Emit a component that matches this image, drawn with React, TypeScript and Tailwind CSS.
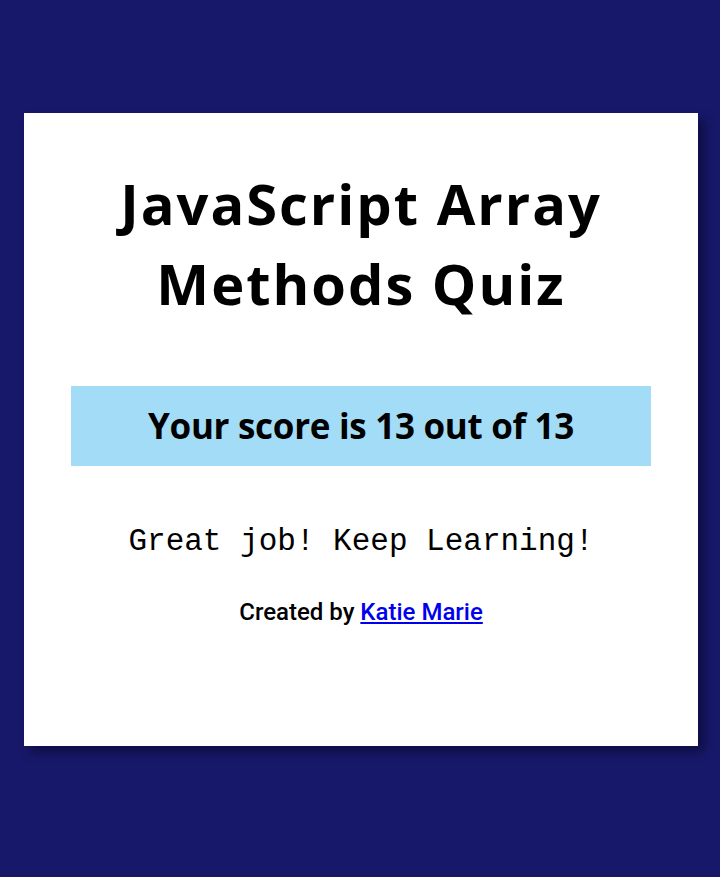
import React from "react";

export default function App() {
  return (
    <div className="min-h-[877px] w-full bg-[#18186a] pt-[113px] pl-[24px]">
      <div className="w-[674px] h-[633px] bg-white shadow-[6px_6px_10px_rgba(0,0,20,0.45)] flex flex-col items-center pt-[50px]">
        <h1
          className="text-center text-[56px] leading-[80px] font-bold text-black tracking-[2px]"
          style={{ fontFamily: "'Open Sans', 'Noto Sans', sans-serif" }}
        >
          JavaScript Array
          <br />
          Methods Quiz
        </h1>
        <div className="mt-[63px] w-[580px] h-[80px] bg-[#a3dcf7] flex items-center justify-center">
          <span
            className="text-[35px] font-bold text-black tracking-[-0.3px]"
            style={{ fontFamily: "'Open Sans', 'Noto Sans', sans-serif" }}
          >
            Your score is 13 out of 13
          </span>
        </div>
        <p
          className="mt-[56px] text-[31px] leading-[40px] text-black"
          style={{ fontFamily: "'Liberation Mono', monospace" }}
        >
          Great job! Keep Learning!
        </p>
        <p
          className="mt-[36px] text-[24px] leading-[28px] font-medium text-black"
          style={{ fontFamily: "Roboto, sans-serif" }}
        >
          Created by{" "}
          <a href="#" className="text-[#0000ee] underline">
            Katie Marie
          </a>
        </p>
      </div>
    </div>
  );
}
